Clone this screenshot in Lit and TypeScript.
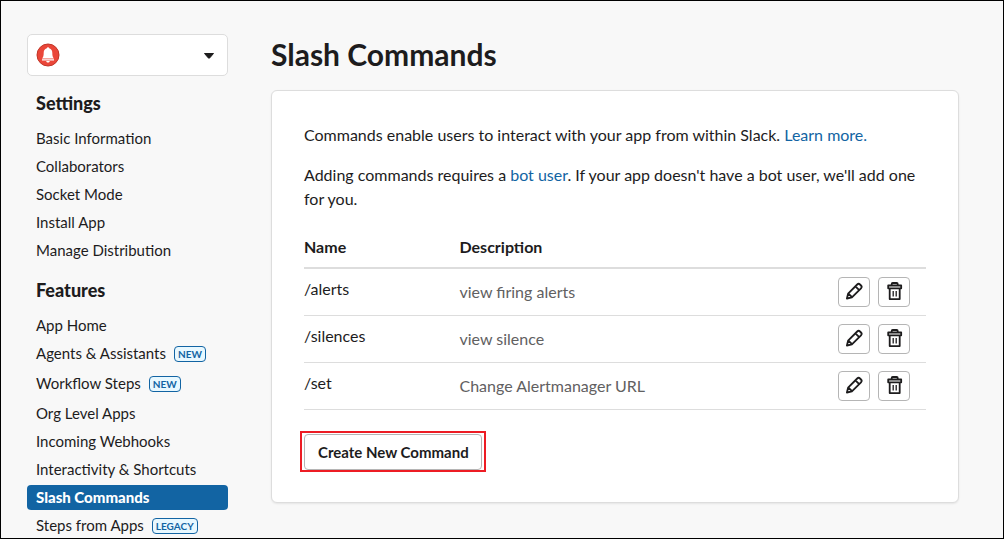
import { LitElement, html, css, svg, nothing } from "lit";
import { customElement, state } from "lit/decorators.js";

interface NavItem {
  label: string;
  badge?: string;
}

interface NavSection {
  title: string;
  items: NavItem[];
}

interface Command {
  name: string;
  description: string;
}

const SECTIONS: NavSection[] = [
  {
    title: "Settings",
    items: [
      { label: "Basic Information" },
      { label: "Collaborators" },
      { label: "Socket Mode" },
      { label: "Install App" },
      { label: "Manage Distribution" },
    ],
  },
  {
    title: "Features",
    items: [
      { label: "App Home" },
      { label: "Agents & Assistants", badge: "NEW" },
      { label: "Workflow Steps", badge: "NEW" },
      { label: "Org Level Apps" },
      { label: "Incoming Webhooks" },
      { label: "Interactivity & Shortcuts" },
      { label: "Slash Commands" },
      { label: "Steps from Apps", badge: "LEGACY" },
    ],
  },
];

const COMMANDS: Command[] = [
  { name: "/alerts", description: "view firing alerts" },
  { name: "/silences", description: "view silence" },
  { name: "/set", description: "Change Alertmanager URL" },
];

const base = css`
  * {
    box-sizing: border-box;
  }
  h1,
  h2,
  p,
  ul {
    margin: 0;
    padding: 0;
  }
  a {
    color: #1264a3;
    text-decoration: none;
  }
  button {
    font: inherit;
    color: inherit;
    cursor: pointer;
  }
`;

@customElement("app-sidebar")
export class AppSidebar extends LitElement {
  @state() private active = "Slash Commands";

  static styles = [
    base,
    css`
      :host {
        display: block;
      }
      .picker {
        display: flex;
        align-items: center;
        justify-content: space-between;
        width: 100%;
        height: 42px;
        padding: 0 12px 0 8px;
        background: #fff;
        border: 1px solid #dddddd;
        border-radius: 5px;
      }
      .title {
        margin: 15px 0 11px;
        padding-left: 9px;
        font-size: 18px;
        line-height: 24px;
        font-weight: 900;
      }
      .list {
        display: grid;
        gap: 3px;
        list-style: none;
      }
      .badged:not(:last-child) {
        padding-bottom: 2px;
      }
      .link {
        display: flex;
        align-items: center;
        gap: 8px;
        padding: 0 9px;
        border-radius: 4px;
        color: #1d1c1d;
        font-size: 15px;
        line-height: 25px;
      }
      .active {
        background: #1264a3;
        color: #fff;
        font-weight: 900;
      }
      .badge {
        height: 16px;
        padding: 0 3px;
        border: 1px solid #1264a3;
        border-radius: 4px;
        background: #e8f8ff;
        color: #1264a3;
        font-size: 10px;
        line-height: 15px;
        font-weight: 700;
      }
    `,
  ];

  render() {
    return html`
      <button class="picker" type="button" aria-label="Select app">
        <svg width="24" height="24" viewBox="0 0 24 24" aria-hidden="true">
          <circle cx="12" cy="12" r="11" fill="#ea4639" stroke="#c13527" />
          <path
            d="M12 4.2c.7 0 1.1.4 1.2 1 2.2.6 3.1 2.4 3.1 4.6 0 3 .4 4.5 1.7 5.7H6c1.3-1.2 1.7-2.7 1.7-5.7 0-2.2.9-4 3.1-4.6.1-.6.5-1 1.2-1zM6 16.3h12v1.2H6zM10.2 18.1h3.6c-.2 1-.9 1.5-1.8 1.5s-1.6-.5-1.8-1.5z"
            fill="#fff"
          />
        </svg>
        <svg width="12" height="8" viewBox="0 0 12 8" aria-hidden="true">
          <path
            d="M1.5 2.5h9L6.7 6.9a1 1 0 0 1-1.4 0z"
            fill="#1d1c1d"
            stroke="#1d1c1d"
            stroke-linejoin="round"
          />
        </svg>
      </button>
      <nav>
        ${SECTIONS.map(
          (section) => html`
            <h2 class="title">${section.title}</h2>
            <ul class="list">
              ${section.items.map((item) => this.renderItem(item))}
            </ul>
          `
        )}
      </nav>
    `;
  }

  private renderItem(item: NavItem) {
    const active = item.label === this.active;
    return html`<li class=${item.badge ? "badged" : "plain"}>
      <a
        class="link ${active ? "active" : ""}"
        href="#"
        aria-current=${active ? "page" : nothing}
        @click=${(e: Event) => {
          e.preventDefault();
          this.active = item.label;
        }}
        ><span>${item.label}</span>${item.badge
          ? html`<span class="badge">${item.badge}</span>`
          : nothing}</a
      >
    </li>`;
  }
}

const pencil = svg`
  <path d="M2.900 17.500 L4.100 12.600 L13.200 3.500 a2 2 0 0 1 2.800 0 L17 4.500 a2 2 0 0 1 0 2.800 L7.900 16.300 Z M11.400 5.300 L15.200 9.100 M4.200 12.500 L8 16.200" />
`;

const trash = svg`
  <path d="M4.200 4.500H17.200V7.300H4.200Z M7.700 4.500V3a1 1 0 0 1 1-1h4a1 1 0 0 1 1 1V4.500 M5.700 7.300V18.100H15.700V7.300" />
  <path d="M9.200 10V15.500M12.200 10V15.500" stroke-width="1.300" />
`;

@customElement("command-table")
export class CommandTable extends LitElement {
  static styles = [
    base,
    css`
      :host {
        display: block;
      }
      .table {
        width: 100%;
        border-collapse: collapse;
        text-align: left;
      }
      .table th {
        padding: 8px 0;
        border-bottom: 2px solid #dddddd;
        line-height: 24px;
        font-weight: 700;
      }
      .table td {
        height: 47px;
        padding: 0;
        border-bottom: 1px solid #dddddd;
        line-height: 24px;
      }
      .table .name {
        width: 25%;
        padding-top: 8px;
        vertical-align: top;
      }
      .table .description {
        padding-top: 1px;
        color: #616061;
      }
      .actions {
        display: flex;
        justify-content: flex-end;
        gap: 8px;
        padding-right: 16px;
      }
      .action {
        display: grid;
        place-items: center;
        width: 32px;
        height: 30px;
        padding: 0 0 2px;
        border: 1px solid #b5b5b5;
        border-radius: 4px;
        background: #fff;
      }
      .icon {
        width: 20px;
        height: 20px;
        fill: none;
        stroke: #1d1c1d;
        stroke-width: 1.8;
        stroke-linejoin: round;
      }
    `,
  ];

  render() {
    return html`
      <table class="table">
        <thead>
          <tr>
            <th scope="col">Name</th>
            <th scope="col">Description</th>
            <th scope="col" aria-label="Actions"></th>
          </tr>
        </thead>
        <tbody>
          ${COMMANDS.map(
            (c) => html`<tr>
              <td class="name">${c.name}</td>
              <td class="description">${c.description}</td>
              <td>
                <div class="actions">
                  <button class="action" type="button" aria-label="Edit ${c.name}">
                    <svg class="icon" viewBox="0 0 20 20">${pencil}</svg>
                  </button>
                  <button class="action" type="button" aria-label="Delete ${c.name}">
                    <svg class="icon" viewBox="0 0 20 20">${trash}</svg>
                  </button>
                </div>
              </td>
            </tr>`
          )}
        </tbody>
      </table>
    `;
  }
}

@customElement("app-root")
export class AppRoot extends LitElement {
  static styles = [
    base,
    css`
      :host {
        display: block;
        box-sizing: border-box;
        min-height: 100vh;
        border: 1px solid #000;
        background: #f8f8f8;
        color: #1d1c1d;
        font-family: Lato, sans-serif;
        font-size: 16px;
        line-height: 24px;
      }
      .layout {
        display: grid;
        grid-template-columns: 201px minmax(0, 1fr);
        align-items: start;
        gap: 43px;
        padding: 33px 44px 0 26px;
      }
      .heading {
        margin-bottom: 16px;
        font-size: 30px;
        line-height: 40px;
        font-weight: 700;
      }
      .card {
        padding: 32px;
        border: 1px solid #dddddd;
        border-radius: 6px;
        background: #fff;
        box-shadow: 0 1px 2px rgba(0, 0, 0, 0.08);
      }
      .text {
        margin-bottom: 16px;
      }
      .highlight {
        width: fit-content;
        margin: 21px 0 -2px -4px;
        padding: 1px 2px 0;
        border: 2px solid #ed1c24;
      }
      .create {
        display: block;
        height: 36px;
        padding: 0 12px 0 13px;
        border: 1px solid #b5b5b5;
        border-radius: 4px;
        background: #fff;
        font-size: 15px;
        font-weight: 700;
      }
    `,
  ];

  render() {
    return html`
      <div class="layout">
        <app-sidebar></app-sidebar>
        <main>
          <h1 class="heading">Slash Commands</h1>
          <section class="card">
            <p class="text">
              Commands enable users to interact with your app from within Slack.
              <a href="#">Learn more.</a>
            </p>
            <p class="text">
              Adding commands requires a <a href="#">bot user</a>. If your app
              doesn't have a bot user, we'll add one for you.
            </p>
            <command-table></command-table>
            <div class="highlight">
              <button class="create" type="button">Create New Command</button>
            </div>
          </section>
        </main>
      </div>
    `;
  }
}
